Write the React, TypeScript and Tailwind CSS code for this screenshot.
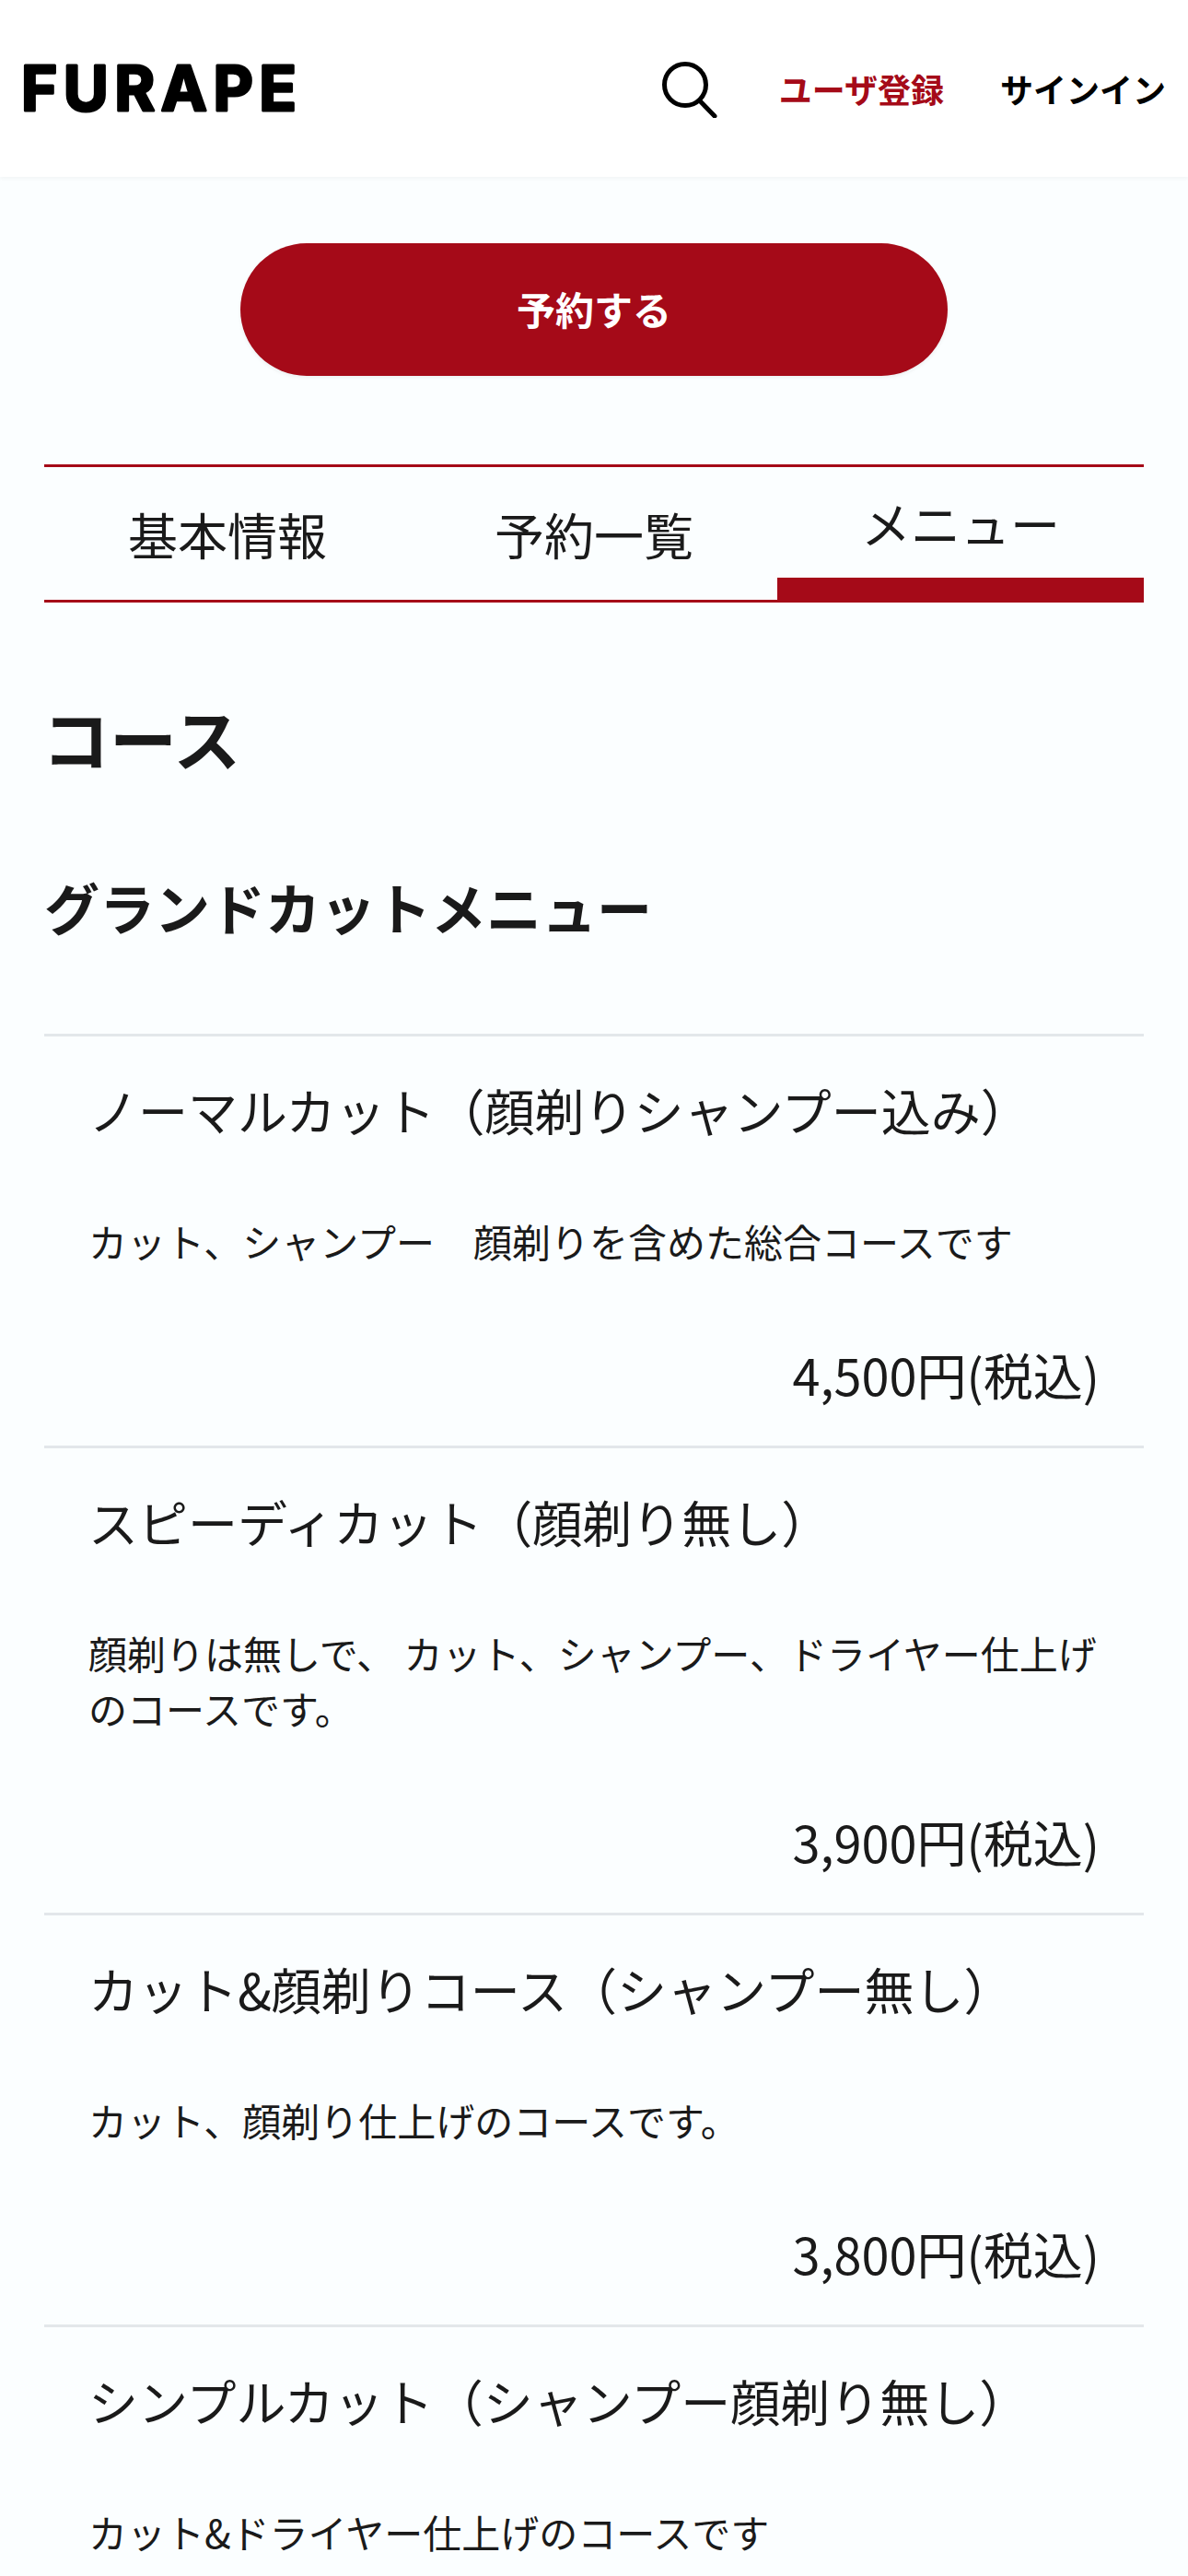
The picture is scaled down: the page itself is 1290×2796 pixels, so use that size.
const sans = "font-['Noto_Sans_CJK_JP','Noto_Sans',sans-serif]";

type Course = { title: string; desc: string[]; price?: string };

const courses: Course[] = [
  { title: "ノーマルカット（顔剃りシャンプー込み）", desc: ["カット、シャンプー　顔剃りを含めた総合コースです"], price: "4,500円(税込)" },
  { title: "スピーディカット（顔剃り無し）", desc: ["顔剃りは無しで、 カット、シャンプー、ドライヤー仕上げ", "のコースです。"], price: "3,900円(税込)" },
  { title: "カット&顔剃りコース（シャンプー無し）", desc: ["カット、顔剃り仕上げのコースです。"], price: "3,800円(税込)" },
  { title: "シンプルカット（シャンプー顔剃り無し）", desc: ["カット&ドライヤー仕上げのコースです"] },
];

function SearchIcon() {
  return (
    <svg width="62" height="62" viewBox="0 0 62 62" fill="none" stroke="#000" strokeWidth="5" strokeLinecap="round">
      <circle cx="26" cy="26" r="22.5" />
      <path d="M41.5 43 L58 60" />
    </svg>
  );
}

function Logo() {
  return (
    <svg width="340" height="96" viewBox="0 0 340 96" fill="#000" stroke="#000" strokeWidth="3" strokeLinejoin="round">
      <text x="2" y="74" fontFamily="Inter, sans-serif" fontWeight="700" fontSize="67" letterSpacing="6.5">FURAPE</text>
    </svg>
  );
}

function Item({ c }: { c: Course }) {
  return (
    <div className="border-t-[3px] border-[#e3e7ea] px-[48px] pt-[41px] pb-[37px]">
      <h3 className="text-[54px] leading-[78px] font-normal text-[#1a1a1a]">{c.title}</h3>
      <div className="mt-[73px] text-[42px] leading-[60px] text-[#1a1a1a]">
        {c.desc.map((d) => (
          <p key={d}>{d}</p>
        ))}
      </div>
      {c.price && <p className="mt-[75px] text-right text-[54px] leading-[80px] text-[#1a1a1a]">{c.price}</p>}
    </div>
  );
}

export default function App() {
  return (
    <div className={`${sans} h-[2796px] overflow-hidden bg-[#fbfeff]`}>
      <header className="flex h-[192px] items-center justify-between bg-white pl-[21px] pr-[24px] shadow-[0_2px_4px_rgba(0,0,0,0.04)]">
        <div className="-mt-[4px] w-[340px]">
          <Logo />
        </div>
        <div className="flex items-center">
          <span className="mr-[66px] mt-[2px] flex">
            <SearchIcon />
          </span>
          <a className="mr-[61px] text-[36px] leading-[50px] font-bold text-[#a50a18]">ユーザ登録</a>
          <a className="text-[36px] leading-[50px] font-bold text-black">サインイン</a>
        </div>
      </header>

      <main className="px-[48px]">
        <div className="flex justify-center pt-[72px]">
          <button className="h-[144px] w-[768px] rounded-[72px] bg-[#a50a18] pb-[3px] text-[42px] font-bold text-white shadow-[0_2px_4px_rgba(0,0,0,0.06)]">
            予約する
          </button>
        </div>

        <nav className="mt-[96px] grid h-[150px] grid-cols-3 border-y-[3px] border-[#a50a18] text-[54px] text-[#1a1a1a]">
          <div className="flex items-center justify-center">基本情報</div>
          <div className="flex items-center justify-center">予約一覧</div>
          <div className="-mb-[3px] flex items-center justify-center border-b-[27px] border-[#a50a18]">メニュー</div>
        </nav>

        <h1 className="mt-[93px] -ml-[2px] text-[73px] leading-[104px] font-bold text-[#1a1a1a]">コース</h1>
        <h2 className="mt-[89px] text-[60px] leading-[87px] font-bold text-[#1a1a1a]">グランドカットメニュー</h2>

        <div className="mt-[95px]">
          {courses.map((c) => (
            <Item key={c.title} c={c} />
          ))}
        </div>
      </main>
    </div>
  );
}
